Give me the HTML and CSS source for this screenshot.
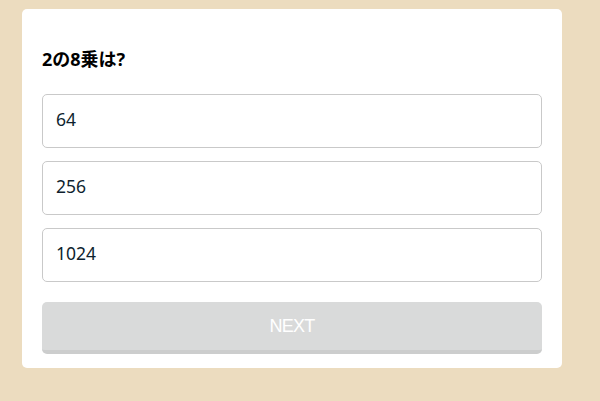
FILE: index.html
```html
<!DOCTYPE html>
<html lang="ja">
<head>
<meta charset="utf-8">
<link rel="stylesheet" href="styles.css">
</head>
<body>
<div class="page">
  <div class="card">
    <h2 class="question">2の8乗は?</h2>
    <ul class="options">
      <li class="option">64</li>
      <li class="option">256</li>
      <li class="option">1024</li>
    </ul>
    <button class="next" disabled>NEXT</button>
  </div>
</div>
</body>
</html>
```
FILE: styles.css
```css
html, body {
  margin: 0;
  padding: 0;
  background: #ecdcbf;
  font-family: "Noto Sans", "Noto Sans CJK JP", sans-serif;
}
.page {
  padding: 9px 0 0 22px;
}
.card {
  width: 500px;
  background: #fff;
  border-radius: 5px;
  padding: 38px 20px 14px;
}
.question {
  margin: 0 0 22px;
  font-size: 18px;
  line-height: 25px;
  font-weight: bold;
  color: #000;
}
.options {
  list-style: none;
  margin: 0;
  padding: 0;
  display: flex;
  flex-direction: column;
  gap: 13px;
}
.option {
  box-sizing: border-box;
  height: 54px;
  border: 1px solid #c9c9c9;
  border-radius: 5px;
  padding: 0 13px 5px;
  display: flex;
  align-items: center;
  font-size: 17.5px;
  color: #0e1f2e;
}
.next {
  display: block;
  box-sizing: border-box;
  width: 100%;
  height: 52px;
  margin-top: 20px;
  border: 0;
  border-bottom: 4px solid #cccdcd;
  border-radius: 5px;
  background: #d9dada;
  color: #fff;
  font-family: "Liberation Sans", Arial, sans-serif;
  font-size: 18px;
  letter-spacing: -0.8px;
  padding: 0;
}
```
